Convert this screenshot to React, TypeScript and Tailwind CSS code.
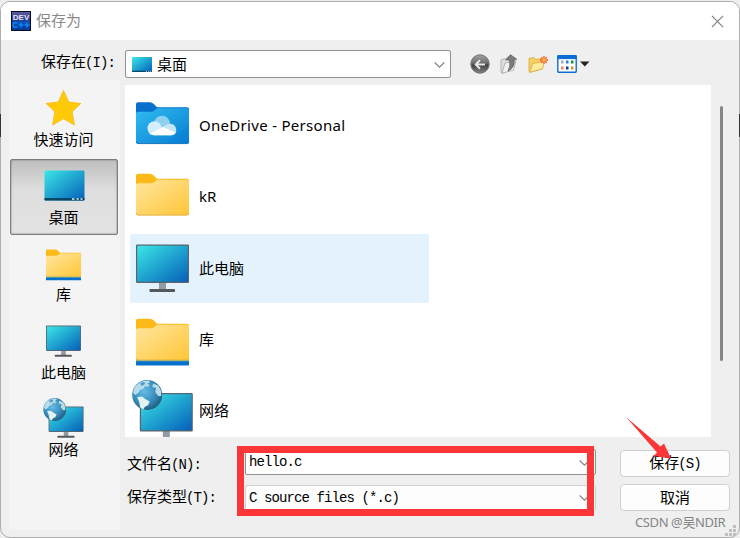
import React, { useId, useState } from "react";

type IconName = "star" | "desktop" | "library" | "pc" | "network" | "folder" | "onedrive";

interface Entry {
  name: string;
  icon: IconName;
}

const places: Entry[] = [
  { name: "快速访问", icon: "star" },
  { name: "桌面", icon: "desktop" },
  { name: "库", icon: "library" },
  { name: "此电脑", icon: "pc" },
  { name: "网络", icon: "network" },
];

const files: Entry[] = [
  { name: "OneDrive - Personal", icon: "onedrive" },
  { name: "kR", icon: "folder" },
  { name: "此电脑", icon: "pc" },
  { name: "库", icon: "library" },
  { name: "网络", icon: "network" },
];

function Screen({ id }: { id: string }) {
  return (
    <linearGradient id={id} x1="0" y1="0" x2="1" y2="1">
      <stop offset="0" stopColor="#3ce6e6" />
      <stop offset="0.5" stopColor="#1fa3d0" />
      <stop offset="1" stopColor="#0560b8" />
    </linearGradient>
  );
}

// 53x42 folder, also used as the base of the library icon
function FolderShape({ id, blue }: { id: string; blue?: boolean }) {
  return (
    <>
      <linearGradient id={id} x1="0" y1="0" x2="1" y2="1">
        <stop offset="0" stopColor={blue ? "#2fbdf0" : "#ffe6a0"} />
        <stop offset="1" stopColor={blue ? "#0a7cd3" : "#ffc636"} />
      </linearGradient>
      <path
        d="M0 12V2Q0 0 2 0H14Q16 0 17.5 1.6L21 5H51Q53 5 53 7V12Z"
        fill={blue ? "#0670cc" : "#fbba17"}
      />
      <path
        d="M0 11Q0 9.5 2 9.5H15Q17 9.5 18.5 8.2L20 6.8Q21 6 22.5 6H51Q53 6 53 8V39.5Q53 41.5 51 41.5H2Q0 41.5 0 39.5Z"
        fill={`url(#${id})`}
      />
      <path
        d="M.4 39.5Q.4 41.4 2 41.4H51Q52.6 41.4 52.6 39.5"
        fill="none"
        stroke={blue ? "#1268b0" : "#d9a63a"}
        strokeWidth="0.8"
      />
    </>
  );
}

function MonitorShape({ id }: { id: string }) {
  return (
    <>
      <Screen id={id} />
      <path d="M23 38H30V45H23Z" fill="#929aa3" />
      <rect x="13.5" y="44.5" width="25.5" height="3" rx="0.7" fill="#55595e" />
      <rect x="0" y="0" width="53" height="38.5" rx="1.2" fill="#5a646c" />
      <rect x="1.2" y="1.3" width="50.6" height="36" fill={`url(#${id})`} />
    </>
  );
}

function Globe({ id }: { id: string }) {
  return (
    <>
      <radialGradient id={id} cx="0.4" cy="0.38" r="0.65">
        <stop offset="0" stopColor="#65bce5" />
        <stop offset="0.65" stopColor="#3589b9" />
        <stop offset="1" stopColor="#225b7c" />
      </radialGradient>
      <circle cx="15" cy="15" r="15" fill={`url(#${id})`} />
      <path
        d="M3 6.5Q8 .5 16 .5L18 2 15 4 18 5 15 7 13 6 11 9 8 10 6 13 3 15 1 13Q1 9 3 6.5Z"
        fill="#b7dbe8"
      />
      <path d="M5 17L10 16.5 13 19 17.5 21.5 16 25 12.5 27 11 29.5 8 27.5 7 22Z" fill="#e2f3f3" />
      <path d="M21 3.5L26 5.5 29 11 29 16 26 16 23 12 24 8 20 7Z" fill="#b9dbe3" />
      <path d="M8 3L12 2 13 4 9 6Z" fill="#4d9dc6" />
    </>
  );
}

function StarShape() {
  return (
    <path
      d="M17.7.5 22.9 12 35 13.5 26.3 21.8 28.6 35 17.7 28.8 6.8 35 9.1 21.8.3 13.5 12.5 12Z"
      fill="#ffca08"
      stroke="#f9b60b"
      strokeWidth="0.8"
      strokeLinejoin="round"
    />
  );
}

function DesktopShape({ id }: { id: string }) {
  return (
    <>
      <Screen id={id} />
      <rect width="40" height="30" rx="1.2" fill={`url(#${id})`} />
      <path d="M0 27.5H40V29Q40 30 39 30H1Q0 30 0 29Z" fill="#064667" />
      <path d="M27.5 28.5H30M32 28.5H34.2M36 28.5H38" stroke="#e5f3fa" strokeWidth="1.6" />
    </>
  );
}

function LibraryShape({ id }: { id: string }) {
  return (
    <>
      <rect y="41" width="53" height="3" fill="#72b8a8" />
      <rect y="42.5" width="53" height="4.3" rx="0.8" fill="#0670cc" />
      <FolderShape id={id} />
    </>
  );
}

function PlaceIcon({ name }: { name: IconName }) {
  const id = useId();
  return (
    <svg width="48" height="44" viewBox="0 0 48 44">
      {name === "star" && (
        <g transform="translate(5.8 4)">
          <StarShape />
        </g>
      )}
      {name === "desktop" && (
        <g transform="translate(4.5 6.5)">
          <DesktopShape id={id} />
        </g>
      )}
      {name === "library" && (
        <g transform="translate(6 8.4) scale(.66)">
          <LibraryShape id={id} />
        </g>
      )}
      {name === "pc" && (
        <g transform="translate(6 6.5) scale(.66)">
          <MonitorShape id={id} />
        </g>
      )}
      {name === "network" && (
        <>
          <g transform="translate(8.6 10.5) scale(.66)">
            <MonitorShape id={id} />
          </g>
          <g transform="translate(3.3 2.1) scale(.76)">
            <Globe id={id + "g"} />
          </g>
        </>
      )}
    </svg>
  );
}

function FileIcon({ name }: { name: IconName }) {
  const id = useId();
  return (
    <svg width="63" height="69" viewBox="0 0 63 69" className="shrink-0">
      {name === "onedrive" && (
        <g transform="translate(6 11.2)">
          <FolderShape id={id} blue />
          <path d="M29 41.5 53 23V41.5Z" fill="#0582d8" opacity="0.35" />
          <circle cx="26" cy="21.5" r="8" fill="#8ed0f0" />
          <circle cx="18.5" cy="26" r="7" fill="#d4eefb" />
          <path
            d="M12.5 30Q14.5 33 18.5 33H35.5Q40.5 32.5 40.3 27.5 39.5 22 34.5 21.5 31 21.3 28 24Z"
            fill="#c3e6f7"
          />
          <path d="M13.5 31 27 24.7 39.5 30.4Q38 33 35 33H18.5Q15 33 13.5 31Z" fill="#ffffff" />
        </g>
      )}
      {name === "folder" && (
        <g transform="translate(6 11.7)">
          <FolderShape id={id} />
        </g>
      )}
      {name === "pc" && (
        <g transform="translate(6 10.4)">
          <MonitorShape id={id} />
        </g>
      )}
      {name === "library" && (
        <g transform="translate(6 13.7)">
          <LibraryShape id={id} />
        </g>
      )}
      {name === "network" && (
        <>
          <g transform="translate(9.8 16.9)">
            <MonitorShape id={id} />
          </g>
          <g transform="translate(2.2 3.9)">
            <Globe id={id + "g"} />
          </g>
        </>
      )}
    </svg>
  );
}

function AppIcon() {
  return (
    <svg width="20" height="20" viewBox="0 0 20 20">
      <defs>
        <linearGradient id="dev" x1="0" y1="0" x2="0" y2="1">
          <stop offset="0" stopColor="#5a5da0" />
          <stop offset="0.45" stopColor="#2c3a8c" />
          <stop offset="0.55" stopColor="#0753c0" />
          <stop offset="1" stopColor="#043a94" />
        </linearGradient>
      </defs>
      <rect width="20" height="20" fill="#06091f" />
      <rect x="1" y="1" width="18" height="18" fill="url(#dev)" />
      <text
        x="10"
        y="8.6"
        textAnchor="middle"
        fontSize="8"
        fontWeight="900"
        fontFamily="Liberation Sans, sans-serif"
        fill="#e6e6f5"
      >
        DEV
      </text>
      <path
        d="M6.5 12H3.5Q2 12 2 14T3.5 16H6.5M7.5 14H12.5M10 11.5V16.5M13.5 14H18.5M16 11.5V16.5"
        stroke="#1285ed"
        strokeWidth="1.4"
        fill="none"
      />
    </svg>
  );
}

function BackIcon() {
  return (
    <svg width="20" height="20" viewBox="0 0 20 20">
      <defs>
        <linearGradient id="back" x1="0" y1="0" x2="0" y2="1">
          <stop offset="0" stopColor="#a3a3a3" />
          <stop offset="0.45" stopColor="#6f6f6f" />
          <stop offset="0.55" stopColor="#404040" />
          <stop offset="1" stopColor="#858585" />
        </linearGradient>
      </defs>
      <circle cx="10" cy="10" r="9.2" fill="url(#back)" stroke="#6e6e6e" />
      <path d="M15 10.5H6M10 6.3 5.7 10.5 10 14.7" fill="none" stroke="#e6e6e6" strokeWidth="2" />
    </svg>
  );
}

function UpIcon() {
  return (
    <svg width="18" height="20" viewBox="0 0 18 20">
      <path d="M1 6 4.5 4.5 6 6 9 5.5V15L4 19 1 18.5Z" fill="#dedede" stroke="#a8a8a8" strokeWidth="0.8" />
      <path d="M5 9 16 6.5 13.5 16 2 19.3Z" fill="#f0f0f0" stroke="#a8a8a8" strokeWidth="0.8" />
      <path
        d="M10.5.8 16.8 5.2H14Q15.5 13 8 17.2 11 12 9.5 5.7H5.5Z"
        fill="#7c7c7c"
        stroke="#555555"
        strokeWidth="0.7"
      />
    </svg>
  );
}

function NewFolderIcon() {
  return (
    <svg width="20" height="18" viewBox="0 0 20 18">
      <path d="M1 3.5 6 2.5 7.5 4.5 14 3.5V14L2 17.3 1 16.5Z" fill="#f5d164" stroke="#d8a637" strokeWidth="0.8" />
      <path d="M4.5 8.5 16.5 6.5 14.5 13.8 2 17.3Z" fill="#ffec9f" stroke="#dda83b" strokeWidth="0.8" />
      <path
        d="M16 1V9M12 5H20M13.2 2.2 18.8 7.8M18.8 2.2 13.2 7.8"
        stroke="#ff5a25"
        strokeWidth="1.3"
      />
      <circle cx="16" cy="5" r="1.8" fill="#ffc35c" />
    </svg>
  );
}

function ViewIcon() {
  return (
    <svg width="20" height="18" viewBox="0 0 20 18">
      <rect x="0.8" y="0.8" width="18.4" height="16.4" rx="0.6" fill="#ffffff" stroke="#0b6dd3" strokeWidth="1.4" />
      <rect x="0.5" y="0.5" width="19" height="3.6" fill="#0b6dd3" />
      <path d="M4 5.5H6.5V8.5H4Z" fill="#a7a2cf" />
      <path d="M9 5.5H11.5V8.5H9Z" fill="#2583df" />
      <path d="M14 5.5H16.5V8.5H14Z" fill="#159337" />
      <path d="M4 11.5H6.5V14.5H4Z" fill="#fa8057" />
      <path d="M9 11.5H11.5V14.5H9Z" fill="#153d9a" />
      <path d="M14 11.5H16.5V14.5H14Z" fill="#c39a23" />
    </svg>
  );
}

function Chevron() {
  return (
    <svg width="11" height="6" viewBox="0 0 11 6" className="mt-px shrink-0">
      <path d="M.7.5 5.5 5.2 10.3.5" fill="none" stroke="#858585" strokeWidth="1.2" />
    </svg>
  );
}

// Full-width text with its half-width access key, e.g. 保存(S)
function KeyLabel({ text, hotkey }: { text: string; hotkey: string }) {
  return (
    <span className="whitespace-nowrap">
      {text}
      <span className="-ml-px font-['Liberation_Mono',monospace] text-[14px] tracking-[-0.9px]">{hotkey}</span>
    </span>
  );
}

export default function App() {
  const [place, setPlace] = useState("桌面");
  const [file, setFile] = useState("此电脑");

  return (
    <div className="relative h-[538px] w-[740px] overflow-hidden bg-[#eeeeee] pt-px font-['Noto_Sans','Noto_Sans_CJK_SC',sans-serif] text-[15px] leading-5 text-black">
      <div className="flex h-[537px] flex-col overflow-hidden rounded-[10px] border border-[#adadad] bg-[#efefef]">
        <header className="flex h-[38px] shrink-0 items-center bg-white pr-[15px] pl-[10px]">
          <AppIcon />
          <span className="mb-[2px] ml-[5px] flex-1 text-[#8a8a8a]">保存为</span>
          <svg width="13" height="13" viewBox="0 0 14 14">
            <path d="M1 1 13 13M13 1 1 13" stroke="#777777" strokeWidth="1.1" />
          </svg>
        </header>

        <div className="flex h-[45px] shrink-0 pt-[10px]">
          <div className="w-[124px] pt-px pl-[40px]">
            <KeyLabel text="保存在" hotkey="(I):" />
          </div>
          <div className="flex h-[28px] w-[326px] items-center rounded-[2px] border border-[#919191] bg-white pr-[5px] pl-[6px]">
            <svg width="20" height="15" viewBox="0 0 40 30">
              <DesktopShape id="combo" />
            </svg>
            <span className="mb-px ml-[5px] flex-1">桌面</span>
            <Chevron />
          </div>
          <div className="flex h-[28px] items-center pl-[19px]">
            <BackIcon />
            <span className="ml-[10px]">
              <UpIcon />
            </span>
            <span className="ml-[10px]">
              <NewFolderIcon />
            </span>
            <span className="ml-[9px]">
              <ViewIcon />
            </span>
            <svg width="10" height="6" viewBox="0 0 10 6" className="ml-[3px]">
              <path d="M0 .5H9.5L4.8 5.5Z" fill="#222222" />
            </svg>
          </div>
        </div>

        <div className="flex min-h-0 flex-1">
          <nav className="-mt-[5px] ml-[8px] h-[450px] w-[111px] shrink-0 bg-[#f4f4f4] px-[1px] pt-px">
            {places.map((p) => (
              <div key={p.name} className="h-[77.5px]">
                <button
                  onClick={() => setPlace(p.name)}
                  className={`flex h-[76px] w-[108px] flex-col items-center border pt-[4px] ${
                    place === p.name
                      ? "rounded-[2px] border-[#7d7d7d] bg-linear-to-b from-[#bebebe] via-[#dedede] via-40% to-[#e3e3e3] shadow-[inset_0_0_2px_#777]"
                      : "border-transparent"
                  }`}
                >
                  <PlaceIcon name={p.icon} />
                  <span className="-mt-px mr-px">{p.name}</span>
                </button>
              </div>
            ))}
          </nav>

          <main className="ml-[5px] flex flex-1 flex-col">
            <div className="flex">
              <div className="h-[352px] w-[586px] overflow-hidden bg-white pt-[6px] pl-[5px]">
                {files.map((f) => (
                  <div key={f.name} className="h-[71.3px]">
                    <div
                      onClick={() => setFile(f.name)}
                      className={`flex h-[69px] w-[299px] items-center rounded-[2px] ${
                        file === f.name ? "bg-[#e3f2fd]" : ""
                      }`}
                    >
                      <FileIcon name={f.icon} />
                      <span
                        className={`mb-px ml-[6px] ${f.icon === "onedrive" ? "tracking-[0.3px]" : ""}`}
                      >
                        {f.name}
                      </span>
                    </div>
                  </div>
                ))}
              </div>
              <div className="mt-[21px] ml-[9px] h-[255px] w-[3px] rounded-full bg-[#868686]" />
            </div>

            <div className="mt-[12px] flex">
              <div className="flex w-[120px] flex-col gap-[11px] pt-[4px] pl-[2px]">
                <KeyLabel text="文件名" hotkey="(N):" />
                <KeyLabel text="保存类型" hotkey="(T):" />
              </div>
              <div className="flex w-[351px] flex-col gap-[10px] font-['Liberation_Mono',monospace] text-[14px] tracking-[-0.9px]">
                <div className="flex h-[26px] items-center rounded-[2px] border border-[#919191] bg-white pr-[5px] pl-[3px]">
                  <span className="flex-1">hello.c</span>
                  <Chevron />
                </div>
                <div className="flex h-[26px] items-center rounded-[2px] border border-[#d2d2d2] bg-[#fdfdfd] pr-[5px] pb-px pl-[3px]">
                  <span className="flex-1">C source files (*.c)</span>
                  <Chevron />
                </div>
              </div>
              <div className="ml-[24px] flex w-[110px] flex-col gap-[7px] pt-px">
                <button className="flex h-[27px] items-center justify-center rounded-[4px] border border-[#d0d0d0] bg-[#fdfdfd] pb-px">
                  <KeyLabel text="保存" hotkey="(S)" />
                </button>
                <button className="flex h-[27px] items-center justify-center rounded-[4px] border border-[#d0d0d0] bg-[#fdfdfd] pb-px">
                  取消
                </button>
              </div>
            </div>
          </main>
        </div>
      </div>

      <div className="absolute top-[446px] left-[237px] h-[70px] w-[357px] border-[7px] border-[#fa3638]" />
      <svg width="48" height="44" viewBox="0 0 48 44" className="absolute top-[416px] left-[625px]">
        <path d="M1 1 35.5 30.5 39 27.5 46 42.5 28.5 40 32 36.5Z" fill="#fa3638" />
      </svg>
      <span className="absolute top-[512px] left-[635px] text-[13px] tracking-[-0.4px] whitespace-nowrap text-[#858585]">
        CSDN @吴NDIR
      </span>
      <svg width="12" height="12" viewBox="0 0 12 12" className="absolute top-[525px] left-[725px]">
        <path d="M8 0h3v3H8zM4 4h3v3H4zM8 4h3v3H8zM0 8h3v3H0zM4 8h3v3H4zM8 8h3v3H8z" fill="#bfbfbf" />
      </svg>
      <div className="absolute top-[114px] left-0 h-[23px] w-px bg-[#333333]" />
      <div className="absolute top-[114px] right-0 h-[23px] w-px bg-[#333333]" />
    </div>
  );
}
